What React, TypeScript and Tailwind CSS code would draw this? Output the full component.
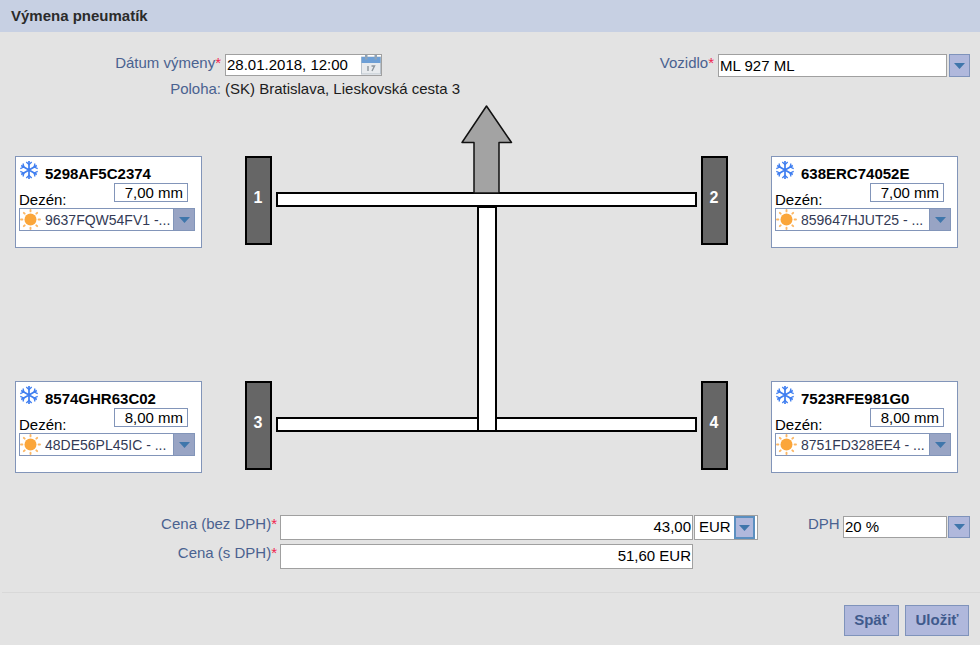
const font = "font-['Liberation_Sans',Arial,sans-serif]";

function Caret() {
  return (
    <svg width="11" height="6" viewBox="0 0 11 6">
      <path d="M0 0H11L5.5 6Z" fill="#3f76ab" />
    </svg>
  );
}

function SnowIcon() {
  return (
    <svg width="20" height="20" viewBox="0 0 20 20" stroke="#3f7ef0" strokeWidth="1.7" fill="none">
      <path d="M10 1V19M2.2 5.5L17.8 14.5M17.8 5.5L2.2 14.5" />
      <path d="M7.3 2L10 4.7L12.7 2M7.3 18L10 15.3L12.7 18M1.3 8.7L4.9 7L4 3.5M18.7 11.3L15.1 13L16 16.5M18.7 8.7L15.1 7L16 3.5M1.3 11.3L4.9 13L4 16.5" strokeWidth="1.3" />
    </svg>
  );
}

function SunIcon() {
  return (
    <svg width="21" height="21" viewBox="0 0 21 21" fill="#fba63a" className="shrink-0">
      <circle cx="10.5" cy="10.5" r="6" />
      <g stroke="#fcb765" strokeWidth="1.9" strokeLinecap="round">
        <path d="M10.5 1V2.4M10.5 18.6V20M1 10.5H2.4M18.6 10.5H20M3.8 3.8L4.7 4.7M16.3 16.3L17.2 17.2M3.8 17.2L4.7 16.3M16.3 4.7L17.2 3.8" />
      </g>
    </svg>
  );
}

function CalendarIcon() {
  return (
    <svg width="20" height="20" viewBox="0 0 20 20">
      <rect x="0.5" y="2" width="19" height="17" fill="#e8ebee" stroke="#b9c2cb" />
      <rect x="0.5" y="2" width="19" height="6" fill="#6d9fd6" />
      <rect x="4" y="0" width="2.5" height="4.5" fill="#8ea3b8" />
      <rect x="13.5" y="0" width="2.5" height="4.5" fill="#8ea3b8" />
      <path d="M7 11V16M10.5 11H13.5L11 16" stroke="#8d969e" strokeWidth="1.4" fill="none" />
    </svg>
  );
}

function DropButton({ className }: { className: string }) {
  return (
    <div className={`flex items-center justify-center border border-[#7f93bb] ${className}`}>
      <Caret />
    </div>
  );
}

function Label({ text, required, className }: { text: string; required?: boolean; className?: string }) {
  return (
    <div className={`text-right text-[15px] leading-4 text-[#4a6290] ${className ?? ''}`}>
      {text}
      {required && <span className="text-[#f0244f]">*</span>}
    </div>
  );
}

function TireCard({ code, depth, pattern }: { code: string; depth: string; pattern: string }) {
  return (
    <div className="flex h-[92px] w-[187px] flex-col border border-[#8295b9] bg-white pl-[3px] pr-[6px] text-black">
      <div className="flex h-[26px] items-start">
        <div className="mt-[3px]">
          <SnowIcon />
        </div>
        <div className="mt-[9px] ml-[6px] text-[15px] leading-4 font-bold">{code}</div>
      </div>
      <div className="flex h-[25px] items-start justify-between">
        <div className="mt-[9px] text-[15px] leading-4">Dezén:</div>
        <div className="mr-[7px] h-[19px] w-[74px] border border-[#8295b9] pr-[4px] text-right text-[15px] leading-[17px]">
          {depth}
        </div>
      </div>
      <div className="flex h-[23px] border border-[#8295b9]">
        <div className="flex min-w-0 flex-1 items-center">
          <SunIcon />
          <div className="ml-[4px] text-[14px] leading-4 whitespace-nowrap text-[#333a55]">{pattern}</div>
        </div>
        <div className="flex w-[21px] items-center justify-center border-l border-[#8295b9] bg-[#98a4c4]">
          <Caret />
        </div>
      </div>
    </div>
  );
}

function Wheel({ n, className }: { n: string; className: string }) {
  return (
    <div className={`absolute flex h-[89px] w-[27px] items-center justify-center border-2 border-black bg-[#666666] pr-[1px] pb-[6px] text-[16px] font-bold text-white ${className}`}>
      {n}
    </div>
  );
}

function Axle({ className }: { className: string }) {
  return <div className={`absolute left-[276px] h-[15px] w-[421px] border-2 border-black bg-white ${className}`} />;
}

export default function App() {
  return (
    <div className={`flex h-[645px] w-[980px] flex-col overflow-hidden bg-[#e3e3e3] ${font}`}>
      <div className="flex h-8 items-center bg-[#c7d0e3] pl-[11px] text-[15px] font-bold text-[#2b2b2b]">
        Výmena pneumatík
      </div>

      <div className="flex items-start pt-[22px]">
        <div>
          <div className="flex items-start">
            <Label text="Dátum výmeny" required className="mt-[1px] w-[221px]" />
            <div className="ml-[4px] flex h-[22px] w-[157px] items-center justify-between border border-[#a0a0a0] bg-white pl-[1px] text-[15px] text-black">
              <span>28.01.2018, 12:00</span>
              <CalendarIcon />
            </div>
          </div>
          <div className="mt-[5px] flex items-center text-[15px] leading-4">
            <Label text="Poloha:" className="w-[221px]" />
            <div className="ml-[4px] text-[#1c1c1c]">(SK) Bratislava, Lieskovská cesta 3</div>
          </div>
        </div>
        <div className="ml-auto flex items-start pr-[10px]">
          <Label text="Vozidlo" required className="mt-[1px] mr-[4px]" />
          <div className="flex h-[23px] w-[229px] items-center border border-[#a0a0a0] bg-white pt-[1px] pl-[1px] text-[15px] text-black">
            ML 927 ML
          </div>
          <DropButton className="ml-[2px] h-[23px] w-[21px] bg-[#b0b8dc]" />
        </div>
      </div>

      <div className="relative mt-[59px] flex h-[317px] flex-col justify-between px-[15px] pr-[22px]">
        <div className="flex justify-between">
          <TireCard code="5298AF5C2374" depth="7,00 mm" pattern="9637FQW54FV1 -..." />
          <TireCard code="638ERC74052E" depth="7,00 mm" pattern="859647HJUT25 - ..." />
        </div>
        <div className="flex justify-between">
          <TireCard code="8574GHR63C02" depth="8,00 mm" pattern="48DE56PL45IC - ..." />
          <TireCard code="7523RFE981G0" depth="8,00 mm" pattern="8751FD328EE4 - ..." />
        </div>

        <Wheel n="1" className="top-0 left-[245px]" />
        <Wheel n="2" className="top-0 left-[701px]" />
        <Wheel n="3" className="top-[225px] left-[245px]" />
        <Wheel n="4" className="top-[225px] left-[701px]" />
        <Axle className="top-[36px]" />
        <Axle className="top-[261px]" />
        <div className="absolute top-[50px] left-[477px] h-[226px] w-[20px] border-2 border-black bg-white" />
        <svg className="absolute top-[-51px] left-[460px]" width="54" height="90" viewBox="0 0 54 90">
          <path d="M26.5 1L51.5 37.5H39V88H14V37.5H2Z" fill="#a3a3a3" stroke="#111" strokeWidth="1.5" strokeLinejoin="round" />
        </svg>
      </div>

      <div className="mt-[42px] flex items-start">
        <Label text="Cena (bez DPH)" required className="mt-[1px] w-[277px]" />
        <div className="ml-[3px] flex h-[25px] w-[413px] items-center justify-end border border-[#a0a0a0] bg-white pr-[1px] text-[15px] text-black">
          43,00
        </div>
        <div className="ml-[1px] flex h-[25px] w-[64px] items-center border border-[#a0a0a0] bg-white pl-[4px] text-[15px] text-black">
          <span className="flex-1">EUR</span>
          <div className="mr-[2px] flex h-[23px] w-[21px] items-center justify-center border-2 border-[#5b8fc0] bg-[#b0b8dc]">
            <Caret />
          </div>
        </div>
        <Label text="DPH" className="mt-[1px] ml-[50px] w-[31px]" />
        <div className="mt-[1px] ml-[4px] flex h-[22px] w-[104px] items-center border border-[#a0a0a0] bg-white pl-[1px] text-[15px] text-black">
          20 %
        </div>
        <DropButton className="mt-[1px] ml-[1px] h-[22px] w-[22px] bg-[#b0b8dc]" />
      </div>

      <div className="mt-[4px] flex items-start">
        <Label text="Cena (s DPH)" required className="mt-[1px] w-[277px]" />
        <div className="ml-[3px] flex h-[25px] w-[413px] items-center justify-end border border-[#a0a0a0] bg-white pr-[1px] text-[15px] text-black">
          51,60 EUR
        </div>
      </div>

      <div className="mt-[23px] ml-[2px] border-t border-[#d8d8d8]" />

      <div className="flex justify-end gap-[6px] pt-[12px] pr-[11px]">
        <div className="flex h-[31px] w-[55px] items-center justify-center border border-[#7f93bb] bg-[#b0b8dc] text-[15px] font-bold text-[#3f5a8c]">
          Späť
        </div>
        <div className="flex h-[31px] w-[64px] items-center justify-center border border-[#7f93bb] bg-[#b0b8dc] text-[15px] font-bold text-[#3f5a8c]">
          Uložiť
        </div>
      </div>
    </div>
  );
}
